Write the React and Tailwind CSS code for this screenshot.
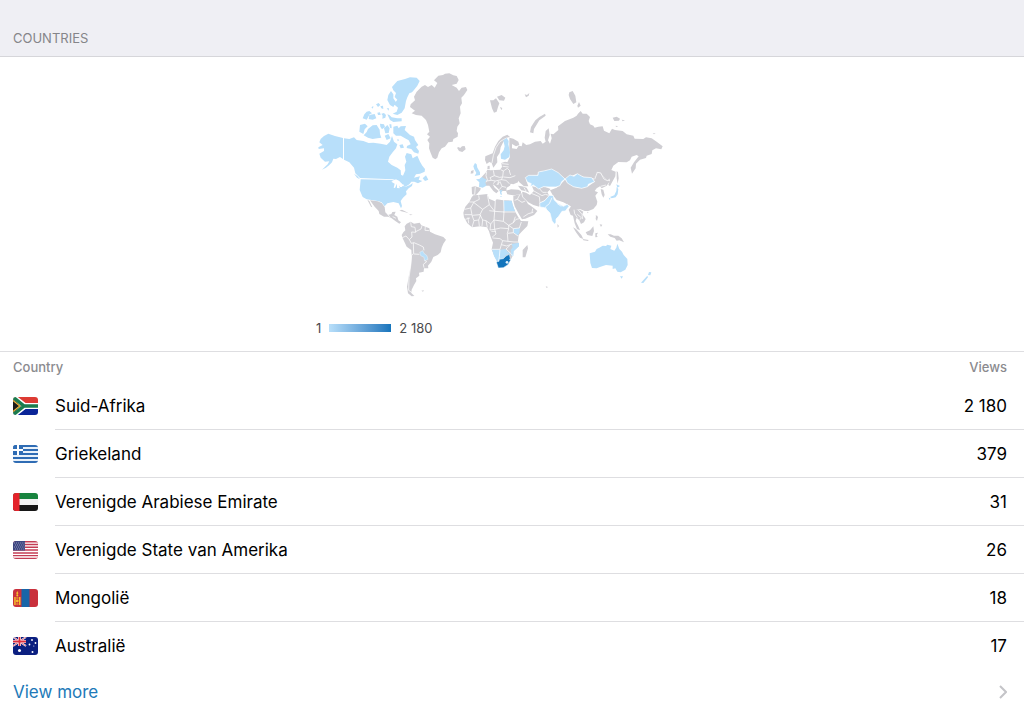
import React from "react";

const GRAY = "#cfced3";
const LIGHT = "#b8dffa";
const DARK = "#1475bc";

// white borders between countries, only strokes
const Borders = ({ d }) => <path d={d} fill="none" stroke="#fff" strokeWidth="2.2" strokeLinejoin="round" />;

function Americas() {
  return (
    <g transform="translate(310 65) scale(0.33333)" strokeLinejoin="round">
      {/* Greenland, Iceland */}
      <path
        fill={GRAY}
        d="M399 30L405 26L418 25L430 31L440 33L446 45L440 56L425 60L440 68L447 78L455 68L468 66L472 75L462 90L454 98L456 115L450 125L452 145L446 160L449 175L442 185L440 198L444 205L443 215L430 222L428 230L415 232L405 245L395 250L387 262L382 278L376 283L368 278L362 264L357 250L358 235L352 225L360 215L351 208L358 200L354 180L348 165L335 152L318 150L305 145L315 137L300 126L302 118L315 106L312 95L320 80L335 65L345 60L354 66L365 60L374 68L382 54L372 46L385 32ZM441 248L447 246L450 250L456 244L464 243L467 253L457 261L447 258Z"
      />
      {/* Arctic islands */}
      <path
        fill={LIGHT}
        d="M246 66L262 48L285 42L300 37L320 38L329 48L322 62L312 75L306 82L298 85L292 97L288 108L284 130L275 143L262 150L248 146L260 140L264 128L252 118L262 104L254 96L258 84L250 76ZM235 90L243 78L250 88L250 100L258 112L250 126L240 120L232 105ZM232 148L238 150L245 157L262 160L275 160L275 169L250 171L240 165ZM198 118L206 114L211 120L204 126ZM211 124L219 122L220 132L214 130ZM170 140L178 138L186 145L179 148L170 164L158 160L163 148ZM178 150L194 147L199 160L188 164L176 162ZM184 127L190 123L189 131ZM202 143L210 142L212 150L204 150ZM214 146L222 144L228 150L226 158L217 161L218 152ZM230 130L237 130L236 137ZM150 180L165 176L173 184L164 193L160 207L148 200ZM174 192L188 181L200 180L209 194L210 207L214 218L202 220L188 222L174 218L161 211L170 201ZM210 176L222 178L225 186L216 193L211 185ZM222 190L232 180L239 190L236 204L226 205ZM224 212L235 207L242 220L230 225ZM238 178L244 178L245 190L240 188ZM250 185L262 182L266 190L272 184L288 183L284 195L300 210L312 215L315 225L325 240L318 246L327 258L325 266L312 262L304 252L290 249L291 243L302 238L296 226L285 220L272 212L258 212L250 205ZM268 240L278 238L282 248L272 250ZM262 222L268 225L263 229Z"
      />
      {/* Alaska */}
      <path
        fill={LIGHT}
        d="M55 206L75 213L99 219L99 282L90 276L78 282L70 281L66 292L58 300L48 308L36 314L53 298L58 289L45 290L32 278L28 266L42 258L42 250L26 252L25 247L38 240L28 232L32 222L42 213Z"
      />
      {/* Canada */}
      <path
        fill={LIGHT}
        d="M102 220L118 222L132 217L140 225L160 228L176 234L190 233L212 236L230 240L240 230L246 213L252 230L262 238L258 250L248 262L238 275L234 290L245 300L262 308L272 316L273 329L279 332L286 316L284 300L289 290L285 275L290 264L304 268L308 280L322 272L330 290L337 302L345 312L344 320L330 326L318 328L312 338L330 334L326 344L337 348L324 355L313 350L304 350L298 358L286 365L276 366L276 356L266 347L248 343L150 339L136 325L132 308L118 292L102 284ZM338 340L348 331L355 344L345 348ZM132 326L142 333L150 343L141 338Z"
      />
      {/* United States */}
      <path
        fill={LIGHT}
        d="M152 343L245 345L260 350L268 356L270 366L285 366L300 360L308 354L306 363L296 370L288 379L290 388L279 398L272 408L276 423L273 430L266 415L250 411L232 415L224 424L215 412L203 408L190 406L170 403L158 396L149 375Z"
      />
      <path fill="#fff" d="M244 350L258 343L268 349L273 356L283 360L279 364L268 362L269 370L261 369L261 356L255 369L251 368L254 356Z" />
      {/* Mexico, Central America, Caribbean */}
      <path
        fill={GRAY}
        d="M180 406L203 409L215 414L224 426L226 442L234 450L244 447L247 441L257 440L253 450L262 455L265 466L273 472L268 476L256 468L244 459L234 455L222 455L208 447L206 438L194 425ZM172 404L178 408L187 427L183 425ZM268 437L276 434L288 440L296 445L286 442ZM297 447L308 449L302 451Z"
      />
      {/* South America */}
      <path
        fill={GRAY}
        d="M284 484L290 476L302 470L312 476L329 473L334 481L348 486L358 490L360 500L375 508L400 516L408 524L400 536L395 548L392 562L383 570L370 576L364 590L354 602L355 610L342 610L341 620L327 623L328 632L318 640L319 648L312 660L305 674L304 684L313 693L305 694L294 685L291 665L297 630L303 600L305 575L304 555L290 545L278 520L275 510L280 502L286 496ZM334 677L342 676L339 680Z"
      />
      <path fill={LIGHT} stroke="#fff" strokeWidth="1" d="M329 562L338 557L342 565L351 572L354 583L344 588L342 577L332 572Z" />
      <Borders d="M302 472L304 485L315 487L317 502L305 501L306 516L298 524L288 513L277 518M298 524L304 535L312 533L328 540L340 546L342 556M310 534L311 566L305 570L302 603L297 638L296 676L306 683M312 567L328 568M344 586L350 590L340 598L342 608M336 482L333 492L317 500M346 485L345 496L358 497M234 449L240 457M248 455L258 460" />
    </g>
  );
}

function OldWorld() {
  return (
    <g transform="translate(450 85) scale(0.33333)" strokeLinejoin="round">
      {/* Arctic islands */}
      <path
        fill={GRAY}
        d="M120 46L130 46L138 40L148 55L144 66L140 80L132 83L126 70ZM141 35L155 30L166 38L162 47L148 46ZM150 66L157 69L154 76ZM224 28L231 30L238 24L236 32L228 37ZM240 142L243 126L256 106L268 96L285 86L287 92L268 106L258 122L252 132L250 145ZM358 22L368 18L376 32L379 52L370 57L360 42L356 30ZM382 62L387 51L392 62L384 68ZM488 98L500 95L510 101L507 107L493 108ZM515 104L525 106L518 109ZM497 122L505 124L498 126ZM608 145L617 145L612 148Z"
      />
      {/* Norway, Sweden */}
      <path
        fill={GRAY}
        d="M105 225L106 214L128 205L135 185L145 168L158 155L172 149L180 156L165 162L158 175L152 187L149 204L141 216L142 232L130 248L125 234L118 231L110 237ZM112 252L113 243L119 242L119 253Z"
      />
      <Borders d="M126 234L130 212L138 188L150 170L160 164M160 164L170 159L178 158" />
      {/* Europe */}
      <path
        fill={GRAY}
        d="M95 276L108 262L112 254L122 256L136 255L150 254L156 246L154 234L165 230L175 232L180 256L192 268L204 282L204 292L190 298L182 296L180 302L170 308L169 317L158 318L152 322L145 312L135 302L128 298L134 308L146 318L139 325L130 318L118 302L106 302ZM65 306L75 304L92 309L91 315L83 325L78 330L66 328ZM63 258L71 255L70 265L62 266ZM168 317L183 313L205 314L214 319L212 328L190 331L172 328ZM204 302L216 304L230 308L238 323L226 318L214 316Z"
      />
      {/* Russia */}
      <path
        fill={GRAY}
        d="M178 158L190 161L205 170L208 180L198 184L186 177L186 190L200 192L206 182L215 184L218 172L229 180L240 178L255 170L272 168L278 176L287 170L284 158L287 138L296 130L299 150L294 166L300 176L305 160L302 146L310 148L325 135L324 124L345 108L370 98L380 92L384 86L392 78L398 86L410 86L420 96L416 108L420 118L430 122L434 128L445 125L458 124L462 137L478 145L486 131L495 135L518 138L530 148L550 152L554 161L580 162L588 157L605 160L620 170L638 184L634 193L618 190L607 196L605 207L590 212L588 219L570 224L558 236L557 250L546 266L542 248L552 232L566 214L560 210L545 215L540 226L530 232L505 231L490 242L484 255L497 260L496 274L480 303L475 300L480 285L470 285L450 262L440 262L432 280L410 278L395 274L380 266L345 282L325 265L305 254L270 260L262 270L235 272L228 285L235 304L222 304L208 292L198 280L190 268L178 258L175 240L172 232L180 215L178 195ZM500 258L504 262L506 280L503 296L500 280Z"
      />
      {/* Finland, UK, France */}
      <path
        fill={LIGHT}
        d="M160 166L170 159L176 168L175 178L180 202L178 216L165 224L153 221L152 208L161 196L164 184ZM70 244L75 234L80 238L82 248L90 262L90 270L74 273L79 264L73 253ZM78 283L88 282L95 276L110 284L106 292L109 302L98 308L87 305L88 292Z"
      />
      <path fill={LIGHT} d="M149 316L158 315L154 320L156 330L151 328ZM151 333L157 334L152 336Z" />
      <Borders d="M110 260L108 272L112 284L108 292M130 256L133 272L120 278L124 286L110 288M133 272L148 277L158 276L160 258L152 254M158 276L154 284L136 288L124 286M136 288L130 296M154 284L168 286L178 296M140 300L150 290L156 304L168 307M156 304L148 314M160 258L172 250L180 258M158 244L176 246M160 276L180 278L196 272M178 258L182 270M76 306L74 329M156 236L176 238M145 288L144 300" />
      {/* Near East, Central Asia */}
      <path
        fill={GRAY}
        d="M190 332L212 327L218 320L228 323L240 330L252 318L246 304L258 306L265 309L284 305L302 312L292 322L298 332L284 346L272 352L268 365L250 360L235 352L227 344L234 357L242 362L254 371L262 378L252 390L226 401L216 403L207 388L194 364L190 348Z"
      />
      <Borders d="M214 318L218 336L228 346M210 328L202 343L194 346M202 343L216 352L226 348M220 396L235 386L250 382M244 325L268 335L270 355M252 318L276 332L286 328L300 332M266 308L278 322L290 322M222 308L228 318M248 371L246 382" />
      {/* China, Korea */}
      <path
        fill={GRAY}
        d="M300 316L320 308L335 295L345 284L355 295L372 306L395 310L415 304L434 290L430 283L438 262L450 262L470 285L480 288L470 302L455 310L450 304L440 310L434 318L444 322L436 332L442 350L440 360L430 372L415 378L404 378L390 372L375 374L360 362L340 352L320 345L308 330ZM452 312L460 314L464 330L460 338L455 328ZM437 391L443 393L440 404ZM412 380L416 382L412 385Z"
      />
      {/* Kazakhstan, Mongolia */}
      <path
        fill={LIGHT}
        stroke="#fff"
        strokeWidth="2"
        d="M226 278L236 271L264 271L265 261L285 257L305 252L325 263L345 282L335 290L330 302L318 306L300 306L280 305L266 312L250 300L240 305L244 296L232 291ZM346 281L360 270L372 274L382 266L400 276L425 278L434 290L415 298L413 305L395 310L370 305L352 294Z"
      />
      <Borders d="M434 283L442 262L452 264L462 282L472 287L480 282M452 304L468 300" />
      {/* Pakistan, India */}
      <path
        fill={LIGHT}
        stroke="#fff"
        strokeWidth="2"
        d="M269 354L284 347L298 331L310 332L312 344L322 354L340 364L352 358L357 364L346 378L336 379L326 394L318 402L318 412L314 418L306 408L300 384L292 376L284 368L270 366Z"
      />
      <path fill={GRAY} d="M322 417L327 423L323 428Z" />
      <Borders d="M290 374L286 366L298 356L306 338M322 356L334 364" />
      {/* Japan */}
      <path fill={LIGHT} d="M480 336L493 331L499 318L500 306L505 312L503 328L497 337L485 340ZM499 298L510 303L502 308ZM476 338L481 340L480 346Z" />
      {/* South East Asia */}
      <path
        fill={GRAY}
        d="M356 374L366 360L376 372L390 374L400 380L397 388L407 402L402 412L393 417L388 406L380 398L377 408L385 424L390 436L381 432L374 415L369 392L362 390ZM369 427L378 432L394 450L400 462L390 458L378 442ZM398 462L416 465L414 468L400 466ZM407 442L420 436L430 424L432 438L427 453L412 450ZM436 445L444 443L440 450L443 456L436 457ZM438 394L444 396L441 408L437 402ZM449 418L457 419L453 426ZM473 448L482 448L492 452L505 452L515 460L522 472L508 466L500 467L494 459L481 455Z"
      />
      <Borders d="M372 374L374 386L382 398M384 374L396 388L398 402M382 388L394 398L390 404" />
      {/* Australia, New Zealand */}
      <path
        fill={LIGHT}
        d="M419 505L435 500L440 492L448 488L458 482L468 483L472 479L484 482L481 492L493 497L499 488L502 476L508 492L516 500L521 510L532 522L533 540L526 554L512 562L502 560L496 550L488 552L488 542L468 540L452 545L440 550L426 549L421 534ZM510 574L519 574L515 581ZM597 561L604 562L601 571L594 570ZM592 572L594 577L580 594L573 593Z"
      />
      <Africa />
      <path fill={GRAY} d="M287 604L294 606L290 609Z" />
    </g>
  );
}

function Africa() {
  return (
    <g transform="translate(0 285)">
      <path
        fill={GRAY}
        d="M65 52L70 46L85 45L112 42L117 56L135 64L140 58L160 61L185 62L188 75L196 96L205 112L213 123L235 124L232 138L215 155L206 165L204 182L207 198L190 214L189 226L182 240L145 250L132 226L125 208L129 188L122 170L117 154L111 142L90 139L66 142L52 130L42 112L40 98L46 80L58 66ZM218 210L232 195L234 205L226 232L218 232Z"
      />
      {/* Egypt, Kenya, Malawi, Mozambique, Namibia, Botswana */}
      <path
        fill={LIGHT}
        d="M161 62L185 62L188 75L195 94L162 94ZM190 146L210 144L208 158L204 166L191 158ZM185 192L207 188L207 199L191 214L190 228L184 228L182 210L188 202ZM126 208L150 209L168 207L172 215L182 220L168 226L158 238L142 247L132 228Z"
      />
      <Borders d="M58 66L72 66L88 58L86 46M72 66L62 84L44 88M62 84L66 104L44 104M72 68L98 88L118 74L112 44M98 88L90 104L66 106M118 74L134 94L136 62M134 94L162 96L161 60M118 92L134 94L132 120L122 132L108 122L98 120L90 104M98 120L96 138M108 122L112 142M132 120L160 124L162 96M160 96L196 96M160 124L176 136L190 128L196 110M176 136L190 146L208 144L214 126M190 128L198 118L208 116M122 132L120 150L134 148L132 120M134 148L152 144L176 146L176 136M134 148L138 162L126 172M176 146L172 160L174 184L158 182L150 176L128 174M174 160L190 158L204 168M190 146L190 158M174 184L192 186L207 186M158 182L154 194L150 208L126 208M150 209L148 230L146 246M154 194L170 198L186 192M168 207L180 196M168 207L184 222L190 228M54 112L56 130M66 106L72 122L66 142M72 122L86 120L88 138M46 118L60 114M86 120L92 104M124 154L138 154" />
      <path fill={DARK} stroke="#fff" strokeWidth="1.5" d="M139 246L147 244L148 238L160 236L168 228L178 223L182 240L174 254L160 263L145 264Z" />
      <circle cx="171" cy="247" r="4" fill="#e3f1fb" />
      <circle cx="180" cy="238" r="2" fill="#e3f1fb" />
    </g>
  );
}

const flagClass = "block h-[18px] w-[25px] rounded-[3px]";

const Flags = {
  za: (
    <svg viewBox="0 0 25 18" preserveAspectRatio="none" className={flagClass} aria-hidden="true">
      <path fill="#dd3b33" d="M0 0h25v9H0z" />
      <path fill="#0a2598" d="M0 9h25v9H0z" />
      <path d="M0 0L11.500 9L0 18M11 9h14" fill="none" stroke="#fff" strokeWidth="6" />
      <path fill="#1b1a17" d="M0 2l8 7-8 7z" />
      <path d="M0 0L11 9L0 18M10 9h15" fill="none" stroke="#1b7c4e" strokeWidth="3.400" />
      <path d="M0 3.500L6.800 9L0 14.500" fill="none" stroke="#f0b93a" strokeWidth="1.200" />
    </svg>
  ),
  gr: (
    <svg viewBox="0 0 25 18" className={flagClass} aria-hidden="true">
      <path fill="#2f6cb4" d="M0 0h25v18H0z" />
      <path d="M0 3h25M0 7h25M0 11h25M0 15h25" stroke="#eaf2fa" strokeWidth="1.800" />
      <path fill="#2f6cb4" d="M0 0h10v10H0z" />
      <path d="M5 0v10M0 5h10" stroke="#fff" strokeWidth="2" />
    </svg>
  ),
  ae: (
    <svg viewBox="0 0 25 18" className={flagClass} aria-hidden="true">
      <path fill="#18843f" d="M0 0h25v6H0z" />
      <path fill="#f3f3f3" d="M0 6h25v6H0z" />
      <path fill="#171717" d="M0 12h25v6H0z" />
      <path fill="#e3232b" d="M0 0h6.500v18H0z" />
    </svg>
  ),
  us: (
    <svg viewBox="0 0 25 18" className={flagClass} aria-hidden="true">
      <path fill="#c43c54" d="M0 0h25v18H0z" />
      <path d="M0 2.100h25M0 4.900h25M0 7.700h25M0 10.500h25M0 13.300h25M0 16h25" stroke="#fff" strokeWidth="1.300" />
      <path fill="#3d4680" d="M0 0h12v9.500H0z" />
      <path d="M1 2h11M2 4h10M1 6h11M2 8h10" stroke="#b7bad4" strokeWidth="0.800" strokeDasharray="0.900 1.200" />
    </svg>
  ),
  mn: (
    <svg viewBox="0 0 25 18" className={flagClass} aria-hidden="true">
      <path fill="#c9303c" d="M0 0h25v18H0z" />
      <path fill="#1765a8" d="M8.500 0h8v18h-8z" />
      <path fill="#f5bd2c" d="M1.200 8h1.500v8H1.200zM6 8h1.500v8H6zM3.200 8.500h2.300v1H3.200zM3.200 14.500h2.300v1H3.200zM4.300 2l1 2-.3 1.500h-1.400L3.300 4z" />
      <circle cx="4.300" cy="12" r="1.400" fill="#f5bd2c" />
      <circle cx="4.300" cy="6.500" r="1" fill="#f5bd2c" />
    </svg>
  ),
  au: (
    <svg viewBox="0 0 25 18" className={flagClass} aria-hidden="true">
      <path fill="#0b1f80" d="M0 0h25v18H0z" />
      <path d="M0 0l13 9M13 0L0 9" stroke="#fff" strokeWidth="1.800" />
      <path d="M0 0l13 9M13 0L0 9" stroke="#d8344a" strokeWidth="0.700" />
      <path d="M6.500 0v9M0 4.500h13" stroke="#fff" strokeWidth="3" />
      <path d="M6.500 0v9M0 4.500h13" stroke="#dc2f40" strokeWidth="1.800" />
      <g fill="#fff">
        <circle cx="6.500" cy="13.500" r="1.500" />
        <circle cx="19" cy="3" r="0.900" />
        <circle cx="16.500" cy="7.500" r="0.900" />
        <circle cx="22.500" cy="6" r="0.900" />
        <circle cx="19.500" cy="15" r="1" />
        <circle cx="20.800" cy="9" r="0.500" />
      </g>
    </svg>
  ),
};

const countries = [
  { code: "za", name: "Suid-Afrika", views: "2 180" },
  { code: "gr", name: "Griekeland", views: "379" },
  { code: "ae", name: "Verenigde Arabiese Emirate", views: "31" },
  { code: "us", name: "Verenigde State van Amerika", views: "26" },
  { code: "mn", name: "Mongolië", views: "18" },
  { code: "au", name: "Australië", views: "17" },
];

function CountryRow({ country, last }) {
  const line = last ? "border-b border-transparent" : "border-b border-[#dedee1]";
  return (
    <tr className="h-12">
      <td className="w-[55px] pl-[13px]">{Flags[country.code]}</td>
      <td className={line}>{country.name}</td>
      <td className={`pr-[17px] text-right ${line}`}>{country.views}</td>
    </tr>
  );
}

export default function App() {
  return (
    <main className="w-full bg-white font-['Inter',sans-serif] text-black">
      <header className="border-b border-[#d6d6da] bg-[#efeff4] px-[13px] pt-7 pb-2">
        <h1 className="text-[13px] leading-5 text-[#858589]">COUNTRIES</h1>
      </header>

      <section className="border-b border-[#dedee1] pt-2 pb-3">
        <figure className="mx-auto w-full max-w-[404px]">
          <svg viewBox="310 65 404 240" className="block w-full" role="img" aria-label="Views by country">
            <Americas />
            <OldWorld />
          </svg>
          <figcaption className="mt-3 flex items-center gap-2 pl-[6px] text-[13px] leading-[22px] text-[#4a4a4d]">
            <span>1</span>
            <span className="h-2 w-[62px] bg-linear-to-r from-[#b8dffa] to-[#1475bc]" />
            <span>2 180</span>
          </figcaption>
        </figure>
      </section>

      <table className="w-full border-separate border-spacing-0 text-[17px] leading-6">
        <thead>
          <tr className="h-[30px] text-[13px] leading-5 text-[#8b8b8f]">
            <th colSpan={2} className="pl-[13px] text-left font-medium">Country</th>
            <th className="pr-[17px] text-right font-medium">Views</th>
          </tr>
        </thead>
        <tbody>
          {countries.map((c, i) => (
            <CountryRow key={c.code} country={c} last={i === countries.length - 1} />
          ))}
        </tbody>
      </table>

      <a href="#countries" className="flex items-center justify-between pt-[11px] pr-[17px] pl-[13px] text-[17px] leading-[22px] text-[#2179b8]">
        View more
        <svg viewBox="0 0 8 14" className="h-[14px] w-2" fill="none" stroke="#c4c4c8" strokeWidth="2" aria-hidden="true">
          <path d="M1 1l6 6-6 6" />
        </svg>
      </a>
    </main>
  );
}
